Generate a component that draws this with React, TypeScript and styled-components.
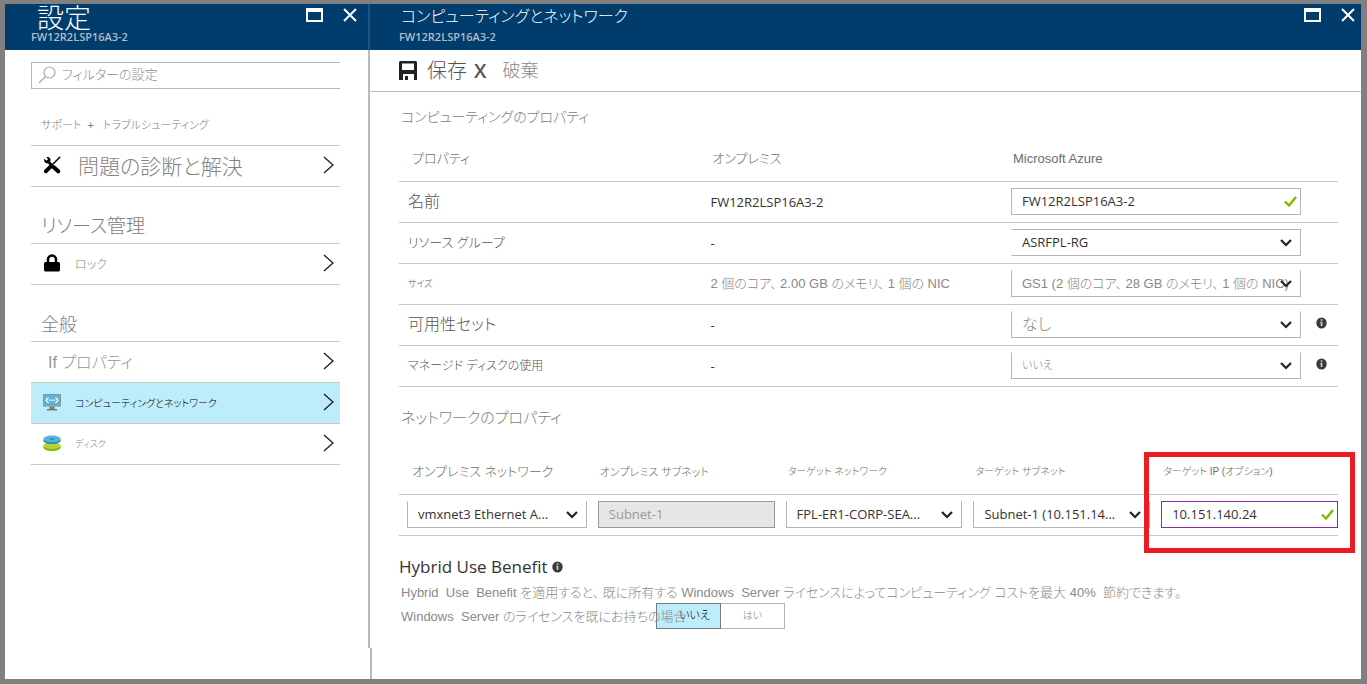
import React from 'react';
import styled, { createGlobalStyle, css } from 'styled-components';

const GlobalStyle = createGlobalStyle`
  *, *::before, *::after { box-sizing: border-box; }
  body {
    margin: 0;
    background: #808080;
    color: #333;
    font-family: "Open Sans", "Noto Sans CJK JP", sans-serif;
    font-size: 13px;
  }
  h1, h2, p { margin: 0; font-weight: 400; }
  button, input, select { font: inherit; color: inherit; margin: 0; }
`;

const jp = css`
  font-family: "Liberation Sans", "Noto Sans CJK JP", sans-serif;
  font-weight: 300;
  font-feature-settings: "palt";
`;

const Frame = styled.div`
  display: flex;
  min-height: 100vh;
  padding: 4px 6px 5px 5px;
  background: #808080;
`;

const Sidebar = styled.aside`
  display: flex;
  flex-direction: column;
  flex: 0 0 365px;
  background: #fff;
`;

const Main = styled.main`
  position: relative;
  flex: 1;
  min-width: 0;
  background: #fff;
  &::after {
    content: "";
    position: absolute;
    left: 0;
    bottom: 0;
    width: 2px;
    height: 31px;
    background: #bababa;
  }
`;

const Header = styled.header<{ $inset: number; $edge?: boolean }>`
  display: flex;
  justify-content: space-between;
  height: 46px;
  padding-left: ${p => p.$inset}px;
  padding-right: ${p => (p.$edge ? 11 : 6)}px;
  background: #003c6c;
  color: #fff;
  ${p => p.$edge && 'border-right: 2px solid #24527c;'}
`;

const Title = styled.h1<{ $size: number; $indent: number }>`
  ${jp}
  height: 26px;
  padding-left: ${p => p.$indent}px;
  font-size: ${p => p.$size}px;
  line-height: ${p => (p.$size > 20 ? 30 : 26)}px;
  white-space: nowrap;
`;

const Subtitle = styled.p`
  font-size: 11px;
  font-weight: 600;
  line-height: 14px;
  color: #b0bcc8;
`;

const WindowButtons = styled.div`
  display: flex;
  gap: 20px;
  height: 22px;
  align-items: center;
`;

const IconButton = styled.button`
  display: flex;
  padding: 0;
  border: 0;
  background: none;
`;

const SidebarBody = styled.div`
  flex: 1;
  margin-bottom: 31px;
  padding: 12px 28px 0 26px;
  border-right: 2px solid #bababa;
`;

const Search = styled.label`
  display: flex;
  align-items: center;
  gap: 6px;
  height: 27px;
  padding: 0 0 2px 6px;
  border: 1px solid #b8b8b8;
  border-right: 0;
`;

const SearchInput = styled.input`
  ${jp}
  flex: 1;
  min-width: 0;
  height: 22px;
  padding: 0;
  border: 0;
  outline: 0;
  background: none;
  font-size: 13px;
  &::placeholder { color: #8a8a8a; opacity: 1; }
`;

const GroupTitle = styled.h2<{ $size: number }>`
  ${jp}
  display: flex;
  align-items: flex-end;
  height: 56px;
  padding: 0 10px 3px;
  font-size: ${p => p.$size}px;
  line-height: ${p => (p.$size < 15 ? 34 : 26)}px;
  color: #7c7c7c;
  white-space: pre;
`;

const NavList = styled.ul`
  margin: 0;
  padding: 0;
  list-style: none;
  border-top: 1px solid #c8c8c8;
`;

const NavLink = styled.a<{ $size: number; $active?: boolean; $plain?: boolean }>`
  ${jp}
  display: flex;
  align-items: center;
  gap: ${p => (p.$size > 18 ? 17 : 14)}px;
  height: 41px;
  padding: 0 6px 2px ${p => (p.$plain ? 17 : 12)}px;
  border-bottom: 1px solid #c8c8c8;
  background: ${p => (p.$active ? '#bdedfa' : 'none')};
  color: ${p => (p.$active ? '#000' : p.$plain ? '#8c999c' : '#848484')};
  font-size: ${p => p.$size}px;
  text-decoration: none;
  white-space: nowrap;
`;

const NavText = styled.span`
  flex: 1;
`;

const Toolbar = styled.div`
  display: flex;
  align-items: center;
  gap: 7px;
  height: 42px;
  padding-left: 29px;
  border-bottom: 1px solid #bababa;
`;

const ToolButton = styled.button<{ $size: number; $muted?: boolean }>`
  ${jp}
  display: flex;
  align-items: center;
  gap: ${p => (p.$muted ? 16 : 10)}px;
  padding: 0;
  border: 0;
  background: none;
  font-size: ${p => p.$size}px;
  line-height: 28px;
  color: ${p => (p.$muted ? '#888' : '#555')};
`;

const CloseMark = styled.span`
  font-family: "Open Sans", sans-serif;
  font-size: 20px;
  font-weight: 600;
  color: #555;
`;

const Content = styled.div`
  padding: 0 23px 20px 29px;
`;

const SectionTitle = styled.h2<{ $size: number; $height: number }>`
  ${jp}
  height: ${p => p.$height}px;
  padding: 12px 0 0 2px;
  font-size: ${p => p.$size}px;
  line-height: 26px;
  color: #7c7c7c;
`;

const TableWrap = styled.div`
  position: relative;
  margin-bottom: 6px;
`;

const Table = styled.table`
  width: 100%;
  table-layout: fixed;
  border-collapse: separate;
  border-spacing: 0;
`;

const HeadCell = styled.th<{ $size: number }>`
  ${jp}
  height: 42px;
  padding: 0 0 4px 13px;
  border-bottom: 1px solid #c8c8c8;
  text-align: left;
  vertical-align: middle;
  font-size: ${p => p.$size}px;
  line-height: 24px;
  color: #6c6c6c;
  white-space: nowrap;
`;

const RowLabel = styled.th<{ $size: number }>`
  ${jp}
  height: 41px;
  padding: 0 0 0 9px;
  border-bottom: 1px solid #c8c8c8;
  text-align: left;
  font-size: ${p => p.$size}px;
  line-height: 26px;
  color: #555;
`;

const Cell = styled.td<{ $inset?: number; $jp?: boolean }>`
  height: 41px;
  padding: 0 0 ${p => (p.$jp ? 4 : 1)}px ${p => p.$inset ?? 11}px;
  border-bottom: 1px solid #c8c8c8;
  white-space: pre;
  ${p => p.$jp && css`${jp} color: #888;`}
`;

const FieldLine = styled.div`
  display: flex;
  align-items: center;
  gap: 15px;
`;

const InfoSlot = styled.span`
  flex: 0 0 22px;
  display: flex;
  padding-bottom: 3px;
`;

const FieldBox = styled.div`
  position: relative;
  flex: 1;
  min-width: 0;
`;

const FieldIcon = styled.span<{ $right: number }>`
  position: absolute;
  top: 0;
  bottom: 0;
  right: ${p => p.$right}px;
  display: flex;
  align-items: center;
  pointer-events: none;
`;

const fieldBase = css`
  display: block;
  width: 100%;
  height: 27px;
  border: 1px solid #b4b4b4;
  border-radius: 0;
  outline: 0;
  background: #fff;
  padding: 0 4px 1px 10px;
`;

const TextField = styled.input<{ $focused?: boolean }>`
  ${fieldBase}
  border-color: ${p => (p.$focused ? '#8a2da5' : '#b4b4b4')};
  &:disabled {
    background: #e6e6e6;
    border-color: #999;
    color: #999;
  }
`;

const SelectField = styled.select<{ $open: 'left' | 'top'; $size?: number }>`
  ${fieldBase}
  appearance: none;
  border-${p => p.$open}-color: transparent;
  ${p => p.$size && css`${jp} font-size: ${p.$size}px; color: #888;`}
`;

const Highlight = styled.div`
  position: absolute;
  top: -1px;
  bottom: -17px;
  left: calc(80% - 6px);
  right: -17px;
  border: 5px solid #ed1c24;
  pointer-events: none;
`;

const BenefitTitle = styled.h2`
  display: flex;
  align-items: center;
  gap: 4px;
  padding-top: 13px;
  font-size: 17px;
  line-height: 24px;
`;

const BenefitText = styled.p`
  ${jp}
  padding: 2px 0 0 2px;
  font-size: 13px;
  line-height: 24px;
  color: #8a8a8a;
  white-space: pre-wrap;
`;

const BenefitRow = styled.div`
  ${jp}
  display: flex;
  height: 26px;
  padding-left: 2px;
  font-size: 13px;
  line-height: 24px;
  color: #8a8a8a;
`;

const Question = styled.span`
  position: relative;
  z-index: 1;
  flex: 0 0 255px;
  width: 255px;
  white-space: pre;
  pointer-events: none;
`;

const Toggle = styled.div`
  display: grid;
  grid-template-columns: 65px 64px;
  height: 26px;
  margin-top: -2px;
`;

const ToggleOption = styled.label<{ $on?: boolean }>`
  position: relative;
  padding-left: ${p => (p.$on ? 12 : 0)}px;
  border: 1px solid ${p => (p.$on ? '#7c7c7c' : '#b4b4b4')};
  ${p => !p.$on && 'border-left: 0;'}
  background: ${p => (p.$on ? '#bdedfa' : '#fff')};
  color: ${p => (p.$on ? '#000' : '#777')};
  font-size: ${p => (p.$on ? 11 : 10)}px;
  line-height: 23px;
  text-align: center;
`;

const HiddenRadio = styled.input`
  position: absolute;
  inset: 0;
  appearance: none;
`;

const Maximize = () => (
  <svg width="17" height="14" viewBox="0 0 17 14"><path d="M0 0h17v14H0zM2 4v8h13V4z" fill="#fff" fillRule="evenodd" /></svg>
);
const Close = () => (
  <svg width="14" height="14" viewBox="0 0 14 14"><path d="M1 1l12 12M13 1L1 13" stroke="#fff" strokeWidth="2" fill="none" /></svg>
);
const Magnifier = () => (
  <svg width="18" height="18" viewBox="0 0 18 18" fill="none" stroke="#a8a8a8" strokeWidth="1.2"><circle cx="11.5" cy="6.5" r="5.5" /><path d="M7.5 10.5L1 17" /></svg>
);
const Chevron = () => (
  <svg width="11" height="18" viewBox="0 0 11 18"><path d="M1 1l9 8-9 8" stroke="#222" strokeWidth="1.4" fill="none" /></svg>
);
const Tools = () => (
  <svg width="18" height="18" viewBox="0 0 18 18">
    <path d="M5 5.500L9 9.500" stroke="#000" strokeWidth="2.600" />
    <path d="M10.500 11L15.200 15.300" stroke="#000" strokeWidth="4" strokeLinecap="round" />
    <path d="M1.200 2.800L3.400 4.700 5 3.200 3.400 1.100C5.600.3 8.200 2 7.400 5L5.400 7.200C2.500 7.800.5 5.600 1.200 2.800z" fill="#000" />
    <path d="M16.800 1.200L9 9" stroke="#000" strokeWidth="1.500" strokeLinecap="round" />
    <path d="M7.300 10.800L3 15.200" stroke="#000" strokeWidth="4" strokeLinecap="round" />
  </svg>
);
const Lock = () => (
  <svg width="18" height="18" viewBox="0 0 18 18">
    <path d="M5 9V5.500a4 4 0 0 1 8 0V9" stroke="#000" strokeWidth="2.500" fill="none" />
    <rect x="1" y="8" width="16" height="9.500" rx="1.500" fill="#000" />
  </svg>
);
const Monitor = () => (
  <svg width="18" height="18" viewBox="0 0 18 18">
    <rect x="0" y="1" width="18" height="12.500" fill="#8f9496" />
    <rect x="1" y="2" width="16" height="10.500" fill="#59b4d9" />
    <path d="M5.500 4.500L3 7.200l2.500 2.700M12.500 4.500L15 7.200l-2.500 2.700" stroke="#fff" strokeWidth="1.300" fill="none" />
    <path d="M6 6.500h1.400v1.400H6zM8.300 6.500h1.400v1.400H8.300zM10.600 6.500H12v1.400h-1.400z" fill="#fff" />
    <path d="M6.500 13.500h5V16H14v1.500H4V16h2.500z" fill="#7a7a7a" />
  </svg>
);
const Disks = () => (
  <svg width="18" height="18" viewBox="0 0 18 18">
    <ellipse cx="9" cy="13.300" rx="8.700" ry="3.700" fill="#7fba00" />
    <ellipse cx="9" cy="11.600" rx="8.700" ry="3.500" fill="#b8d432" />
    <ellipse cx="9" cy="6.200" rx="8.700" ry="3.800" fill="#1f7fb8" />
    <ellipse cx="9" cy="5" rx="8.700" ry="3.500" fill="#59b4d9" />
    <ellipse cx="9" cy="5" rx="2.600" ry="1.100" fill="#2d8fc4" />
  </svg>
);
const Save = () => (
  <svg width="18" height="19" viewBox="0 0 18 19">
    <path d="M1 0h16l1 1v18h-3v-6H4v6H0V1zM3 2.500v6.500h12V2.500z" fill="#222" fillRule="evenodd" />
    <path d="M6 15h3v4H6z" fill="#222" />
  </svg>
);
const Arrow = () => (
  <svg width="12" height="8" viewBox="0 0 12 8"><path d="M1 1l5 5 5-5" stroke="#222" strokeWidth="2.200" fill="none" /></svg>
);
const Check = () => (
  <svg width="13" height="11" viewBox="0 0 13 11"><path d="M1 5.500l4 4L12 1" stroke="#7fba00" strokeWidth="2.400" fill="none" /></svg>
);
const Info = () => (
  <svg width="11" height="12" viewBox="0 0 11 12">
    <ellipse cx="5.500" cy="6" rx="5.200" ry="5.600" fill="#3a3a3a" />
    <path d="M4.700 2.200h1.700v1.500H4.700zM4.200 4.800h2.200v4.200H4.700V5.800h-.5z" fill="#ccc" />
  </svg>
);

type DropProps = { label: string; value: string; open?: 'left' | 'top'; size?: number; arrow?: number };
const Drop = ({ label, value, open = 'top', size, arrow = 9 }: DropProps) => (
  <FieldBox>
    <SelectField aria-label={label} $open={open} $size={size}>
      <option>{value}</option>
    </SelectField>
    <FieldIcon $right={arrow}><Arrow /></FieldIcon>
  </FieldBox>
);

type TextProps = { label: string; value: string; focused?: boolean };
const ValidText = ({ label, value, focused }: TextProps) => (
  <FieldBox>
    <TextField aria-label={label} defaultValue={value} $focused={focused} />
    <FieldIcon $right={4}><Check /></FieldIcon>
  </FieldBox>
);

const Controls = () => (
  <WindowButtons>
    <IconButton aria-label="最大化"><Maximize /></IconButton>
    <IconButton aria-label="閉じる"><Close /></IconButton>
  </WindowButtons>
);

type NavProps = { text: string; size: number; icon?: React.ReactNode; active?: boolean };
const NavItem = ({ text, size, icon, active }: NavProps) => (
  <li>
    <NavLink href="#" $size={size} $active={active} $plain={!icon}>
      {icon}
      <NavText>{text}</NavText>
      <Chevron />
    </NavLink>
  </li>
);

export default function App() {
  return (
    <>
      <GlobalStyle />
      <Frame>
        <Sidebar>
          <Header $inset={26} $edge>
            <div>
              <Title $size={27} $indent={6}>設定</Title>
              <Subtitle>FW12R2LSP16A3-2</Subtitle>
            </div>
            <Controls />
          </Header>
          <SidebarBody>
            <Search>
              <Magnifier />
              <SearchInput aria-label="フィルターの設定" placeholder="フィルターの設定" />
            </Search>
            <GroupTitle $size={11}>{'サポート  +   トラブルシューティング'}</GroupTitle>
            <NavList>
              <NavItem text="問題の診断と解決" size={21} icon={<Tools />} />
            </NavList>
            <GroupTitle $size={19}>リソース管理</GroupTitle>
            <NavList>
              <NavItem text="ロック" size={12} icon={<Lock />} />
            </NavList>
            <GroupTitle $size={18}>全般</GroupTitle>
            <NavList>
              <NavItem text="If プロパティ" size={16} />
              <NavItem text="コンピューティングとネットワーク" size={10} icon={<Monitor />} active />
              <NavItem text="ディスク" size={9} icon={<Disks />} />
            </NavList>
          </SidebarBody>
        </Sidebar>
        <Main>
          <Header $inset={29}>
            <div>
              <Title $size={16} $indent={2}>コンピューティングとネットワーク</Title>
              <Subtitle>FW12R2LSP16A3-2</Subtitle>
            </div>
            <Controls />
          </Header>
          <Toolbar>
            <ToolButton $size={20}><Save />保存</ToolButton>
            <ToolButton $size={18} $muted><CloseMark>X</CloseMark>破棄</ToolButton>
          </Toolbar>
          <Content>
            <SectionTitle $size={14} $height={48}>コンピューティングのプロパティ</SectionTitle>
            <TableWrap>
              <Table>
                <colgroup><col style={{ width: '32%' }} /><col style={{ width: '32%' }} /><col /></colgroup>
                <thead>
                  <tr>
                    <HeadCell $size={13}>プロパティ</HeadCell>
                    <HeadCell $size={13}>オンプレミス</HeadCell>
                    <HeadCell $size={13}>Microsoft Azure</HeadCell>
                  </tr>
                </thead>
                <tbody>
                  <tr>
                    <RowLabel $size={16}>名前</RowLabel>
                    <Cell>FW12R2LSP16A3-2</Cell>
                    <Cell><FieldLine><ValidText label="名前" value="FW12R2LSP16A3-2" /><InfoSlot /></FieldLine></Cell>
                  </tr>
                  <tr>
                    <RowLabel $size={13}>リソース グループ</RowLabel>
                    <Cell>-</Cell>
                    <Cell><FieldLine><Drop label="リソース グループ" value="ASRFPL-RG" open="left" /><InfoSlot /></FieldLine></Cell>
                  </tr>
                  <tr>
                    <RowLabel $size={9}>サイズ</RowLabel>
                    <Cell $jp>{'2 個のコア、 2.00 GB のメモリ、 1 個の NIC'}</Cell>
                    <Cell><FieldLine><Drop label="サイズ" value={'GS1 (2 個のコア、\u00a028 GB のメモリ、\u00a01 個の NIC)'} size={13} /><InfoSlot /></FieldLine></Cell>
                  </tr>
                  <tr>
                    <RowLabel $size={16}>可用性セット</RowLabel>
                    <Cell>-</Cell>
                    <Cell><FieldLine><Drop label="可用性セット" value="なし" size={16} /><InfoSlot><Info /></InfoSlot></FieldLine></Cell>
                  </tr>
                  <tr>
                    <RowLabel $size={12}>マネージド ディスクの使用</RowLabel>
                    <Cell>-</Cell>
                    <Cell><FieldLine><Drop label="マネージド ディスクの使用" value="いいえ" size={11} /><InfoSlot><Info /></InfoSlot></FieldLine></Cell>
                  </tr>
                </tbody>
              </Table>
            </TableWrap>
            <SectionTitle $size={15} $height={60}>ネットワークのプロパティ</SectionTitle>
            <TableWrap>
              <Table>
                <thead>
                  <tr>
                    <HeadCell $size={13}>オンプレミス ネットワーク</HeadCell>
                    <HeadCell $size={11}>オンプレミス サブネット</HeadCell>
                    <HeadCell $size={10}>ターゲット ネットワーク</HeadCell>
                    <HeadCell $size={10}>ターゲット サブネット</HeadCell>
                    <HeadCell $size={10}>ターゲット IP (オプション)</HeadCell>
                  </tr>
                </thead>
                <tbody>
                  <tr>
                    <Cell $inset={8}><Drop label="オンプレミス ネットワーク" value="vmxnet3 Ethernet A..." /></Cell>
                    <Cell><TextField aria-label="オンプレミス サブネット" defaultValue="Subnet-1" disabled /></Cell>
                    <Cell><Drop label="ターゲット ネットワーク" value="FPL-ER1-CORP-SEA..." /></Cell>
                    <Cell><Drop label="ターゲット サブネット" value="Subnet-1 (10.151.14..." /></Cell>
                    <Cell><ValidText label="ターゲット IP (オプション)" value="10.151.140.24" focused /></Cell>
                  </tr>
                </tbody>
              </Table>
              <Highlight />
            </TableWrap>
            <BenefitTitle>Hybrid Use Benefit <Info /></BenefitTitle>
            <BenefitText>{'Hybrid  Use  Benefit を適用すると、 既に所有する Windows  Server ライセンスによってコンピューティング コストを最大 40%  節約できます。'}</BenefitText>
            <BenefitRow>
              <Question>{'Windows  Server のライセンスを既にお持ちの場合'}</Question>
              <Toggle role="radiogroup" aria-label="Windows Server のライセンス">
                <ToggleOption $on><HiddenRadio type="radio" name="license" defaultChecked />いいえ</ToggleOption>
                <ToggleOption><HiddenRadio type="radio" name="license" />はい</ToggleOption>
              </Toggle>
            </BenefitRow>
          </Content>
        </Main>
      </Frame>
    </>
  );
}
